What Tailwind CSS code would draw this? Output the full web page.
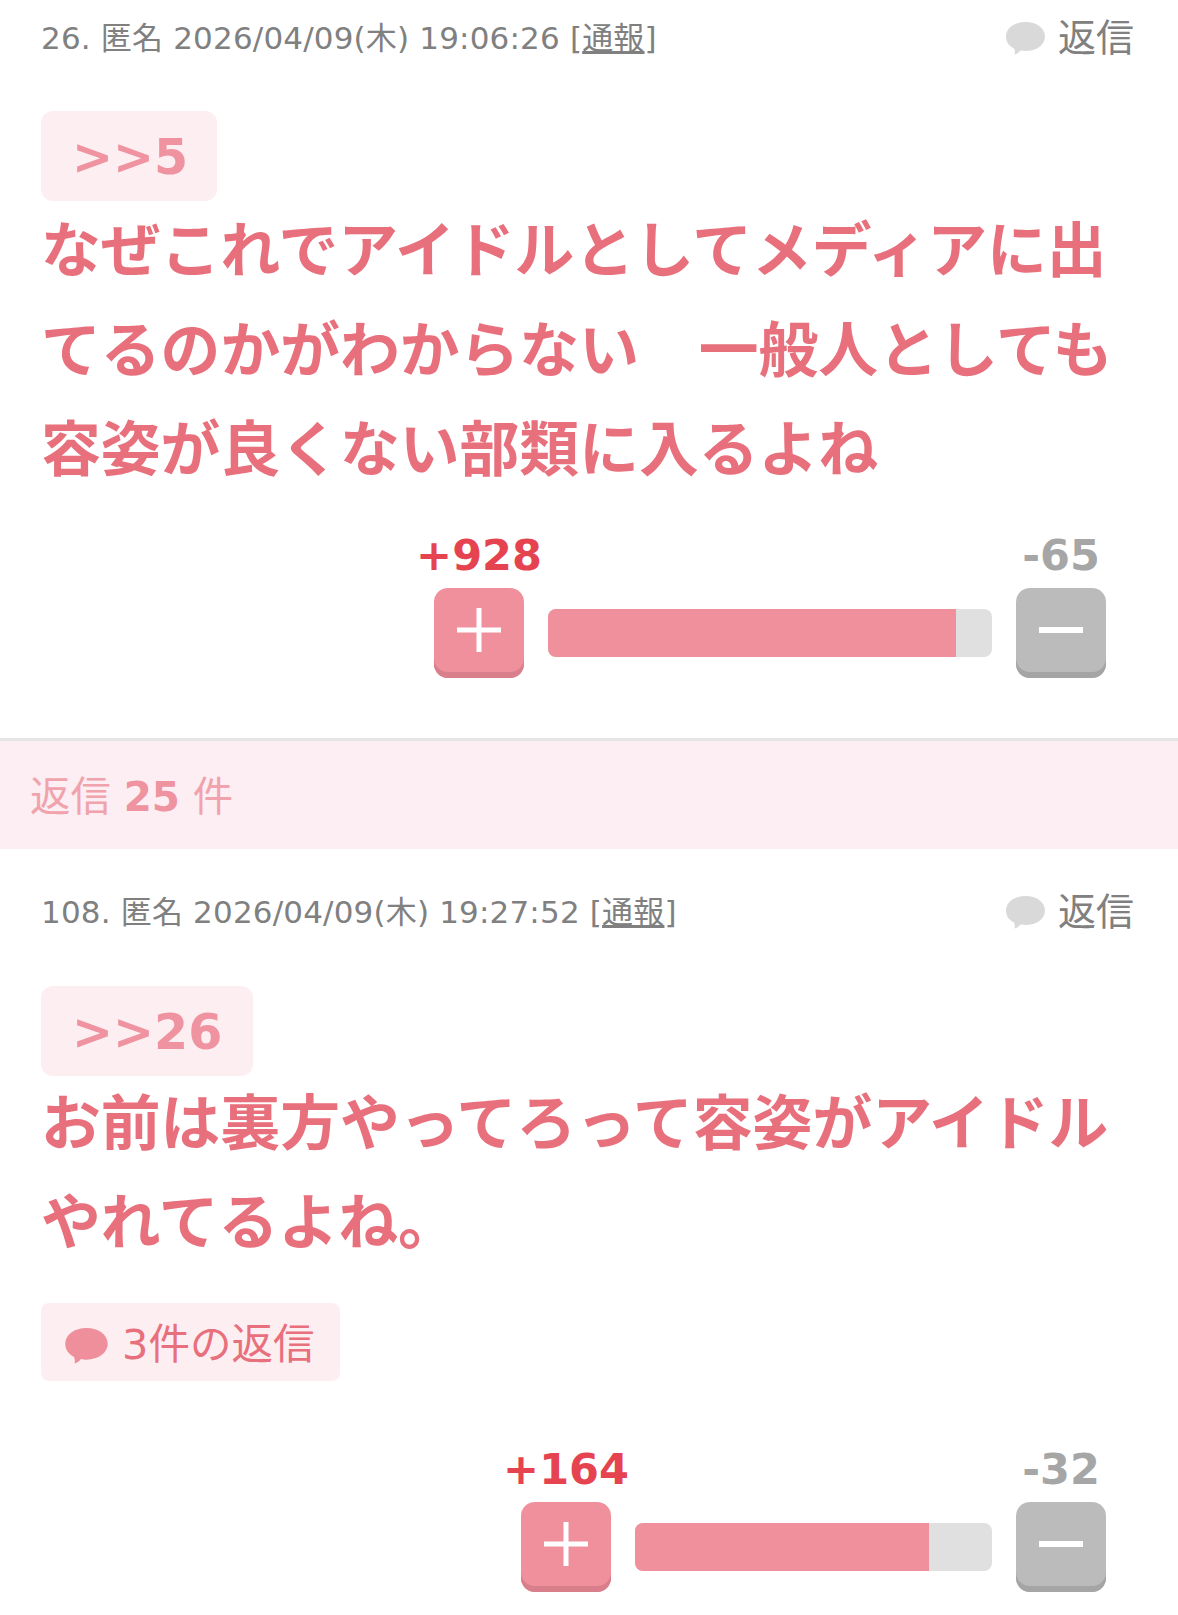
<!DOCTYPE html>
<html lang="ja">
<head>
    <meta charset="UTF-8">
    <meta name="viewport" content="width=device-width, initial-scale=1.0">
    <title>返信</title>
    <script src="https://cdn.jsdelivr.net/npm/@tailwindcss/browser@4"></script>
</head>
<body class="bg-white font-['DejaVu_Sans','Noto_Sans_CJK_JP',sans-serif]">
    <div class="w-[1178px] h-[1615px] overflow-hidden">
        <!-- コメント 26 -->
        <article class="pl-[41px] pr-[44px]">
            <div class="flex items-center justify-between h-[76px] text-[#808080]">
                <p class="text-[31px] tracking-[0.17px]">26. 匿名 2026/04/09(木) 19:06:26 [<span class="underline">通報</span>]</p>
                <div class="flex items-center gap-[13px] text-[38px]">
                    <svg class="w-[39px] h-[34px]" viewBox="0 0 39 34"><path fill="#d9d9d9" d="M19.500 1C30.500 1 39 7 39 15.500C39 24 30.500 30 19.500 30C17.800 30 16 29.800 14.500 29.500C13 31.500 11 33 8.500 33.500C9 32 9 29.500 8 27.500C3 25 0 21 0 15.500C0 7 8.500 1 19.500 1Z"/></svg>
                    <span>返信</span>
                </div>
            </div>
            <a class="block w-[176px] h-[90px] mt-[35px] pl-[31px] rounded-[12px] bg-[#fdeef1] text-[#ee939f] text-[49px] font-bold leading-[94px]">&gt;&gt;5</a>
            <p class="mt-[1px] text-[59.8px] leading-[99.5px] font-bold text-[#e8707c]">なぜこれでアイドルとしてメディアに出てるのかがわからない　一般人としても容姿が良くない部類に入るよね</p>
            <div class="flex justify-end pr-[28px] mt-[29px]">
                <div class="flex items-end gap-[24px]">
                    <div class="flex flex-col items-center w-[90px]">
                        <span class="text-[43px] font-bold leading-[50px] whitespace-nowrap text-[#e5434f]">+928</span>
                        <button class="relative flex items-center justify-center w-[90px] h-[90px] mt-[8px] pb-[6px] rounded-[14px] bg-[#ef909c] shadow-[inset_0_-6px_0_#d97f8c]">
                            <svg class="w-[44px] h-[44px]" viewBox="0 0 44 44"><path fill="#fff" d="M19.500 0h5v19.500H44v5H24.500V44h-5V24.500H0v-5h19.500z"/></svg>
                        </button>
                    </div>
                    <div class="w-[444px] h-[48px] mb-[21px] rounded-[8px] overflow-hidden bg-[#e0e0e0]">
                        <div class="h-full bg-[#ef909c]" style="width: 92%"></div>
                    </div>
                    <div class="flex flex-col items-center w-[90px]">
                        <span class="text-[43px] font-bold leading-[50px] whitespace-nowrap text-[#a6a6a6]">-65</span>
                        <button class="relative flex items-center justify-center w-[90px] h-[90px] mt-[8px] pb-[6px] rounded-[14px] bg-[#bbbbbb] shadow-[inset_0_-6px_0_#a5a5a5]">
                            <svg class="w-[44px] h-[6px]" viewBox="0 0 44 6"><path fill="#fff" d="M0 0h44v6H0z"/></svg>
                        </button>
                    </div>
                </div>
            </div>
        </article>

        <div class="mt-[60px] h-[111px] border-t-[3px] border-[#e5e5e5] bg-[#fceef2] pl-[30px] pt-[6px] flex items-center text-[40.4px] text-[#f0a3ad]">
            <span>返信 <b class="text-[#ee939f]">25</b> 件</span>
        </div>

        <!-- コメント 108 -->
        <article class="pl-[41px] pr-[44px]">
            <div class="flex items-center justify-between h-[127px] text-[#808080]">
                <p class="text-[31px] tracking-[0.17px]">108. 匿名 2026/04/09(木) 19:27:52 [<span class="underline">通報</span>]</p>
                <div class="flex items-center gap-[13px] text-[38px]">
                    <svg class="w-[39px] h-[34px]" viewBox="0 0 39 34"><path fill="#d9d9d9" d="M19.500 1C30.500 1 39 7 39 15.500C39 24 30.500 30 19.500 30C17.800 30 16 29.800 14.500 29.500C13 31.500 11 33 8.500 33.500C9 32 9 29.500 8 27.500C3 25 0 21 0 15.500C0 7 8.500 1 19.500 1Z"/></svg>
                    <span>返信</span>
                </div>
            </div>
            <a class="block w-[212px] h-[90px] mt-[10px] pl-[31px] rounded-[12px] bg-[#fdeef1] text-[#ee939f] text-[49px] font-bold leading-[94px]">&gt;&gt;26</a>
            <p class="-mt-[1px] text-[59.8px] leading-[99.5px] font-bold text-[#e8707c]">お前は裏方やってろって容姿がアイドルやれてるよね。</p>
            <a class="flex items-center gap-[14px] w-[299px] h-[78px] mt-[29px] pl-[24px] pt-[8px] rounded-[8px] bg-[#fdeef1] text-[41.5px] text-[#e8707c]">
                <svg class="w-[43px] h-[37px]" viewBox="0 0 39 34"><path fill="#ee8f9b" d="M19.500 1C30.500 1 39 7 39 15.500C39 24 30.500 30 19.500 30C17.800 30 16 29.800 14.500 29.500C13 31.500 11 33 8.500 33.500C9 32 9 29.500 8 27.500C3 25 0 21 0 15.500C0 7 8.500 1 19.500 1Z"/></svg>
                <span>3件の返信</span>
            </a>
            <div class="flex justify-end pr-[28px] mt-[63px]">
                <div class="flex items-end gap-[24px]">
                    <div class="flex flex-col items-center w-[90px]">
                        <span class="text-[43px] font-bold leading-[50px] whitespace-nowrap text-[#e5434f]">+164</span>
                        <button class="relative flex items-center justify-center w-[90px] h-[90px] mt-[8px] pb-[6px] rounded-[14px] bg-[#ef909c] shadow-[inset_0_-6px_0_#d97f8c]">
                            <svg class="w-[44px] h-[44px]" viewBox="0 0 44 44"><path fill="#fff" d="M19.500 0h5v19.500H44v5H24.500V44h-5V24.500H0v-5h19.500z"/></svg>
                        </button>
                    </div>
                    <div class="w-[357px] h-[48px] mb-[21px] rounded-[8px] overflow-hidden bg-[#e0e0e0]">
                        <div class="h-full bg-[#ef909c]" style="width: 82.4%"></div>
                    </div>
                    <div class="flex flex-col items-center w-[90px]">
                        <span class="text-[43px] font-bold leading-[50px] whitespace-nowrap text-[#a6a6a6]">-32</span>
                        <button class="relative flex items-center justify-center w-[90px] h-[90px] mt-[8px] pb-[6px] rounded-[14px] bg-[#bbbbbb] shadow-[inset_0_-6px_0_#a5a5a5]">
                            <svg class="w-[44px] h-[6px]" viewBox="0 0 44 6"><path fill="#fff" d="M0 0h44v6H0z"/></svg>
                        </button>
                    </div>
                </div>
            </div>
        </article>
    </div>
</body>
</html>
